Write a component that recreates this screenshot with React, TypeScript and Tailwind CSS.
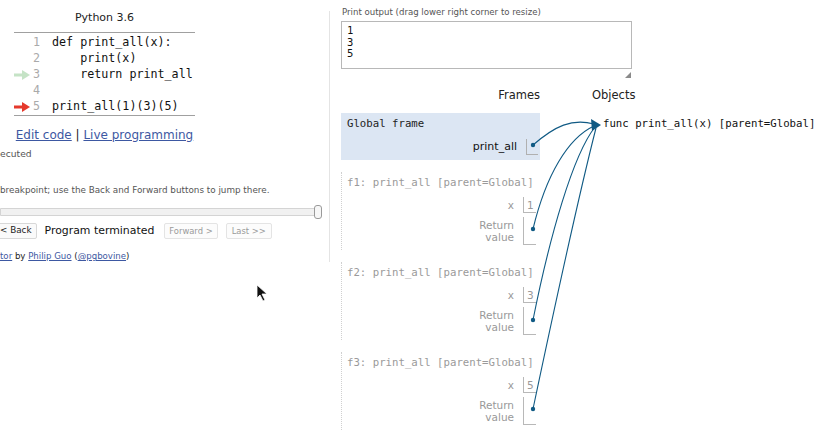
const sans = "font-['DejaVu_Sans',sans-serif]"
const mono = "font-['DejaVu_Sans_Mono',monospace]"

const code = [
  { n: 1, text: 'def print_all(x):', mark: '' },
  { n: 2, text: '    print(x)', mark: '' },
  { n: 3, text: '    return print_all', mark: 'green' },
  { n: 4, text: '', mark: '' },
  { n: 5, text: 'print_all(1)(3)(5)', mark: 'red' },
]

function LineArrow({ color }: { color: string }) {
  return (
    <svg width="16" height="10" viewBox="0 0 16 10">
      <rect x="0" y="3.5" width="9" height="3" fill={color} />
      <polygon points="8,0 16,5 8,10" fill={color} />
    </svg>
  )
}

function CodePanel() {
  return (
    <div className="ml-[14px] w-[181px]">
      <div className={`${sans} text-[11px] leading-[14px] text-center text-[#222]`}>Python 3.6</div>
      <div className="mt-[7px] border-t border-b border-[#a0a0a0] pt-[2px]">
        {code.map((l) => (
          <div key={l.n} className="flex items-center h-[16px]">
            <div className="w-[16px] flex items-center">
              {l.mark === 'green' && <LineArrow color="#c5e3c6" />}
              {l.mark === 'red' && <LineArrow color="#e5392c" />}
            </div>
            <div className={`${mono} w-[10px] text-right text-[11.7px] text-[#aaa]`}>{l.n}</div>
            <div className={`${mono} ml-[12px] text-[11.7px] whitespace-pre text-[#111]`}>{l.text}</div>
          </div>
        ))}
      </div>
      <div className={`${sans} mt-[11px] text-[12px] leading-[16px] text-center text-[#222]`}>
        <span className="underline text-[#3d58a2]">Edit code</span> |{' '}
        <span className="underline text-[#3d58a2]">Live programming</span>
      </div>
    </div>
  )
}

function LeftPanel() {
  return (
    <div className="w-[330px] shrink-0 mt-[11px] h-[251px] border-r border-[#e4e4e4] overflow-hidden">
      <CodePanel />
      <div className={`${sans} mt-[5px] text-[9.2px] leading-[12px] text-[#555]`}>ecuted</div>
      <div className={`${sans} mt-[24px] text-[8.8px] leading-[12px] text-[#555] whitespace-nowrap`}>
        breakpoint; use the Back and Forward buttons to jump there.
      </div>
      <div className="mt-[9px] h-[14px] w-[322px] flex items-center relative">
        <div className="flex-1 h-[8px] border border-[#d4d4d4] bg-[#f1f1f1] rounded-r-[2px]" />
        <div className="absolute right-0 top-0 w-[8px] h-[14px] rounded-[3px] border border-[#9a9a9a] bg-[#f7f7f7]" />
      </div>
      <div className={`${sans} mt-[4px] h-[16px] flex items-center whitespace-nowrap`}>
        <div className="-ml-[5px] h-[16px] px-[4px] flex items-center border border-[#d8d8d8] rounded-[2px] bg-[#fafafa] text-[8.8px] text-[#222]">
          &lt; Back
        </div>
        <div className="ml-[8px] text-[10.9px] text-[#111]">Program terminated</div>
        <div className="ml-[10px] h-[16px] px-[4px] flex items-center border border-[#e4e4e4] rounded-[2px] bg-[#fcfcfc] text-[8.4px] text-[#9a9a9a]">
          Forward &gt;
        </div>
        <div className="ml-[8px] h-[16px] px-[5px] flex items-center border border-[#e4e4e4] rounded-[2px] bg-[#fcfcfc] text-[8.4px] text-[#9a9a9a]">
          Last &gt;&gt;
        </div>
      </div>
      <div className={`${sans} mt-[11px] text-[8.6px] leading-[12px] text-[#222] whitespace-nowrap`}>
        <span className="underline text-[#3d58a2]">tor</span> by{' '}
        <span className="underline text-[#3d58a2]">Philip Guo</span> (
        <span className="underline text-[#3d58a2]">@pgbovine</span>)
      </div>
    </div>
  )
}

function StackFrame({ label, value }: { label: string; value: string }) {
  return (
    <div className="mt-[12px] w-[199px] h-[78px] border-l border-dotted border-[#d0d0d0] pl-[5px] pt-[4px]">
      <div className={`${mono} text-[10.7px] leading-[14px] text-[#9a9a9a] whitespace-nowrap`}>{label}</div>
      <div className={`${sans} mt-[7px] flex flex-col items-end gap-[4px] pr-[4px] text-[#999]`}>
        <div className="flex">
          <div className="pr-[9px] text-[10.5px] leading-[16px] text-right">x</div>
          <div className="w-[13px] h-[16px] border-l border-b border-[#b8b8b8] pl-[3px] text-[10.5px] leading-[16px]">
            {value}
          </div>
        </div>
        <div className="flex">
          <div className="pr-[9px] text-[10.5px] leading-[12px] text-right pt-[2px]">
            Return
            <br />
            value
          </div>
          <div className="w-[13px] h-[28px] border-l border-b border-[#b8b8b8]" />
        </div>
      </div>
    </div>
  )
}

function RightPanel() {
  return (
    <div className="ml-[11px] pt-[6px] flex flex-col">
      <div className={`${sans} ml-[1px] text-[8.6px] leading-[12px] text-[#555] whitespace-nowrap`}>
        Print output (drag lower right corner to resize)
      </div>
      <div className={`${mono} mt-[3px] w-[291px] h-[48px] border border-[#b8b8b8] pl-[5px] pt-[3px] text-[10.5px] leading-[11.5px] text-[#111]`}>
        <div>1</div>
        <div>3</div>
        <div>5</div>
      </div>
      <div className="w-[291px] flex justify-end">
        <svg width="6" height="6" className="mt-[3px] mr-[1px]">
          <polygon points="6,0 6,6 0,6" fill="#8a8a8a" />
        </svg>
      </div>
      <div className={`${sans} mt-[9px] flex text-[11.5px] leading-[16px] text-[#222]`}>
        <div className="w-[199px] text-right">Frames</div>
        <div className="ml-[52px]">Objects</div>
      </div>
      <div className="mt-[10px] flex">
        <div className="flex flex-col">
          <div className="w-[199px] h-[47px] bg-[#dce6f3] pl-[6px] pt-[4px]">
            <div className={`${mono} text-[10.7px] leading-[14px] text-[#222]`}>Global frame</div>
            <div className={`${sans} mt-[8px] flex justify-end pr-[2px]`}>
              <div className="pr-[9px] text-[11px] leading-[16px] text-[#111]">print_all</div>
              <div className="w-[12px] h-[16px] border-l border-b border-[#b0b0b0]" />
            </div>
          </div>
          <StackFrame label="f1: print_all [parent=Global]" value="1" />
          <StackFrame label="f2: print_all [parent=Global]" value="3" />
          <StackFrame label="f3: print_all [parent=Global]" value="5" />
        </div>
        <div className={`${mono} ml-[63px] pt-[4px] text-[10.7px] leading-[14px] text-[#111] whitespace-nowrap`}>
          func print_all(x) [parent=Global]
        </div>
      </div>
    </div>
  )
}

function Arrows() {
  const c = '#105a84'
  return (
    <svg className="absolute inset-0 pointer-events-none" width="830" height="442">
      <g fill="none" stroke={c} strokeWidth="1.1">
        <path d="M533,145 C555,126 572,118 594,124" />
        <path d="M533,229 C546,175 568,138 594,126" />
        <path d="M533,320 C550,235 573,155 595,127" />
        <path d="M533,409 C556,300 584,175 596,128" />
      </g>
      <polygon points="601,125 591,119 592,131" fill={c} />
      <g fill={c}>
        <circle cx="533" cy="145" r="2.2" />
        <circle cx="533" cy="229" r="2.2" />
        <circle cx="533" cy="320" r="2.2" />
        <circle cx="533" cy="409" r="2.2" />
      </g>
      <path d="M257,285 L257,298 L260,295 L263,301 L265,300 L262,294 L267,294 Z" fill="#111" stroke="#fff" strokeWidth="0.8" />
    </svg>
  )
}

export default function App() {
  return (
    <div className="relative w-[830px] h-[442px] bg-white overflow-hidden flex items-start">
      <LeftPanel />
      <RightPanel />
      <Arrows />
    </div>
  )
}
